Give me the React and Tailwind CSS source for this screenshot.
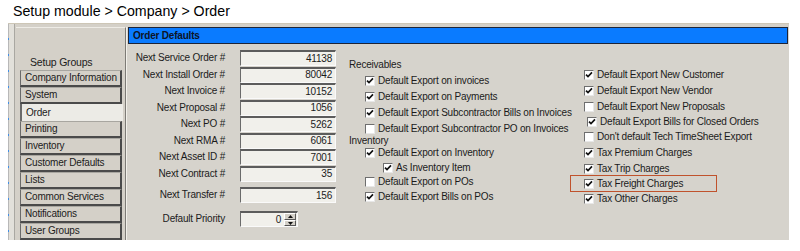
import React from 'react';

const numbers = [
    { label: 'Next Service Order #', value: '41138' },
    { label: 'Next Install Order #', value: '80042' },
    { label: 'Next Invoice #', value: '10152' },
    { label: 'Next Proposal #', value: '1056' },
    { label: 'Next PO #', value: '5262' },
    { label: 'Next RMA #', value: '6061' },
    { label: 'Next Asset ID #', value: '7001' },
    { label: 'Next Contract #', value: '35' },
];

const groups = [
    'Company Information',
    'System',
    'Order',
    'Printing',
    'Inventory',
    'Customer Defaults',
    'Lists',
    'Common Services',
    'Notifications',
    'User Groups',
];

const CheckBox = ({ checked }) => (
    <span className="w-[10px] h-[10px] shrink-0 bg-white border-t border-l border-t-[#6e6e6e] border-l-[#6e6e6e] border-b border-r border-b-[#e8e8e8] border-r-[#e8e8e8] flex items-center justify-center">
        {checked && (
            <svg width="8" height="8" viewBox="0 0 8 8">
                <path d="M1 3.6 L3 5.6 L7 1.4" fill="none" stroke="#111" strokeWidth="1.7" />
            </svg>
        )}
    </span>
);

const Check = ({ checked, label, className = '' }) => (
    <div className={`flex items-center gap-[3px] whitespace-nowrap ${className}`}>
        <CheckBox checked={checked} />
        <span>{label}</span>
    </div>
);

const NumBox = ({ value, className = '' }) => (
    <div className={`w-[96px] h-[16px] bg-[#f1f0eb] border-t-2 border-l border-t-[#5c5c5c] border-l-[#6a6a6a] border-b border-r border-b-[#fafafa] border-r-[#fafafa] flex items-center justify-end pr-[3px] ${className}`}>
        {value}
    </div>
);

export default function App() {
    return (
        <div className="w-[800px] h-[251px] bg-white overflow-hidden font-['Liberation_Sans',Arial,sans-serif] text-[#1b1b1b]">
            {/* Breadcrumb */}
            <div className="h-[23px] pl-[13px] pt-[3px] text-[14.2px] leading-[17px] text-black">
                Setup module &gt; Company &gt; Order
            </div>

            {/* Window */}
            <div className="ml-[8px] w-[781px] h-[217px] flex border-t border-t-[#cdc6b6] bg-[#d4d0c8] text-[10px] leading-[12px] tracking-[-0.2px]">
                {/* left frame strip */}
                <div className="w-[8px] flex">
                    <div className="w-[1px] bg-[#b8b8b8] bg-[repeating-linear-gradient(to_bottom,#b8b8b8_0px,#b8b8b8_14px,#3f8ee8_14px,#3f8ee8_16px)]" />
                    <div className="w-[5px] bg-[#e2e0da]" />
                    <div className="w-[1px] bg-[#a9a7a1]" />
                    <div className="w-[1px] bg-[#d4d0c8]" />
                </div>

                {/* Setup groups */}
                <div className="w-[110px] mt-[3px] border-t border-t-[#eeece6] border-r border-r-[#7d7b76] flex flex-col pl-[4px]">
                    <div className="h-[42px] pt-[28px] pl-[10px] text-[10.5px]">Setup Groups</div>
                    <div className="flex flex-col">
                        {groups.map((g) =>
                            g === 'Order' ? (
                                <div
                                    key={g}
                                    className="w-[103px] h-[17px] bg-[#ecebe6] border-l-2 border-l-[#6a6a6a] pl-[4px] flex items-center"
                                >
                                    {g}
                                </div>
                            ) : (
                                <div
                                    key={g}
                                    className="w-[102px] h-[17px] bg-[#d4d0c8] border-t border-l border-t-[#a8a6a0] border-l-[#6a6a6a] border-r-2 border-b-2 border-r-[#4a4a4a] border-b-[#4a4a4a] pl-[4px] flex items-center"
                                >
                                    {g}
                                </div>
                            )
                        )}
                    </div>
                </div>

                {/* Main */}
                <div className="flex-1 mt-[3px] border-l border-l-[#f2f0ea] pl-[1px] flex flex-col bg-[#d6d3cc]">
                    <div className="h-[17px] bg-[#0a7bff] border border-[#1c2438] pl-[4px] flex items-center font-bold text-[#0d1426] mr-[1px]">
                        Order Defaults
                    </div>

                    <div className="flex">
                        {/* numbers */}
                        <div className="flex flex-col pt-[6px]">
                            {numbers.map((n) => (
                                <div key={n.label} className="flex items-center h-[16.5px]">
                                    <div className="w-[97px] text-right">{n.label}</div>
                                    <NumBox value={n.value} className="ml-[15px]" />
                                </div>
                            ))}
                            <div className="flex items-center h-[16.5px] mt-[5px]">
                                <div className="w-[97px] text-right">Next Transfer #</div>
                                <NumBox value="156" className="ml-[15px]" />
                            </div>
                            <div className="flex items-center h-[16.5px] mt-[7.5px]">
                                <div className="w-[97px] text-right">Default Priority</div>
                                <div className="ml-[15px] w-[58px] h-[16px] bg-[#f1f0eb] border-t-2 border-l border-t-[#5c5c5c] border-l-[#6a6a6a] border-b border-r border-b-[#fafafa] border-r-[#fafafa] flex items-center justify-end pr-[1px]">
                                    <span className="mr-[3px]">0</span>
                                    <div className="w-[12px] h-[13px] flex flex-col">
                                        <div className="h-[6.5px] bg-[#d4d0c8] border-t border-l border-white border-r border-b border-r-[#555] border-b-[#555] flex items-center justify-center">
                                            <svg width="5" height="3" viewBox="0 0 5 3"><path d="M0 3 L2.5 0 L5 3 Z" fill="#111" /></svg>
                                        </div>
                                        <div className="h-[6.5px] bg-[#d4d0c8] border-t border-l border-white border-r border-b border-r-[#555] border-b-[#555] flex items-center justify-center">
                                            <svg width="5" height="3" viewBox="0 0 5 3"><path d="M0 0 L2.5 3 L5 0 Z" fill="#111" /></svg>
                                        </div>
                                    </div>
                                </div>
                            </div>
                        </div>

                        {/* receivables / inventory */}
                        <div className="w-[235px] ml-[13px] pt-[13px] flex flex-col">
                            <div className="h-[16px] flex items-center">Receivables</div>
                            <Check checked label="Default Export on invoices" className="h-[16px] pl-[16px]" />
                            <Check checked label="Default Export on Payments" className="h-[16px] pl-[16px]" />
                            <Check checked label="Default Export Subcontractor Bills on Invoices" className="h-[16px] pl-[16px]" />
                            <Check label="Default Export Subcontractor PO on Invoices" className="h-[15px] pl-[16px]" />
                            <div className="h-[9px] flex items-center">Inventory</div>
                            <Check checked label="Default Export on Inventory" className="h-[16px] pl-[16px]" />
                            <Check checked label="As Inventory Item" className="h-[14px] pl-[34px]" />
                            <Check label="Default Export on POs" className="h-[14px] pl-[16px]" />
                            <Check checked label="Default Export Bills on POs" className="h-[16px] pl-[16px]" />
                        </div>

                        {/* export options */}
                        <div className="pt-[23px] flex flex-col">
                            <Check checked label="Default Export New Customer" className="h-[16px]" />
                            <Check checked label="Default Export New Vendor" className="h-[16px]" />
                            <Check label="Default Export New Proposals" className="h-[15px]" />
                            <Check checked label="Default Export Bills for Closed Orders" className="h-[15px] pl-[3px]" />
                            <Check label="Don't default Tech TimeSheet Export" className="h-[16px]" />
                            <Check checked label="Tax Premium Charges" className="h-[16px]" />
                            <Check checked label="Tax Trip Charges" className="h-[15px]" />
                            <div className="relative">
                                <Check checked label="Tax Freight Charges" className="h-[15px]" />
                                <div className="absolute left-[-14px] top-[-1px] w-[147px] h-[17px] border-[1.5px] border-[#c0522c] pointer-events-none" />
                            </div>
                            <Check checked label="Tax Other Charges" className="h-[15px]" />
                        </div>
                    </div>
                </div>
            </div>
        </div>
    );
}
